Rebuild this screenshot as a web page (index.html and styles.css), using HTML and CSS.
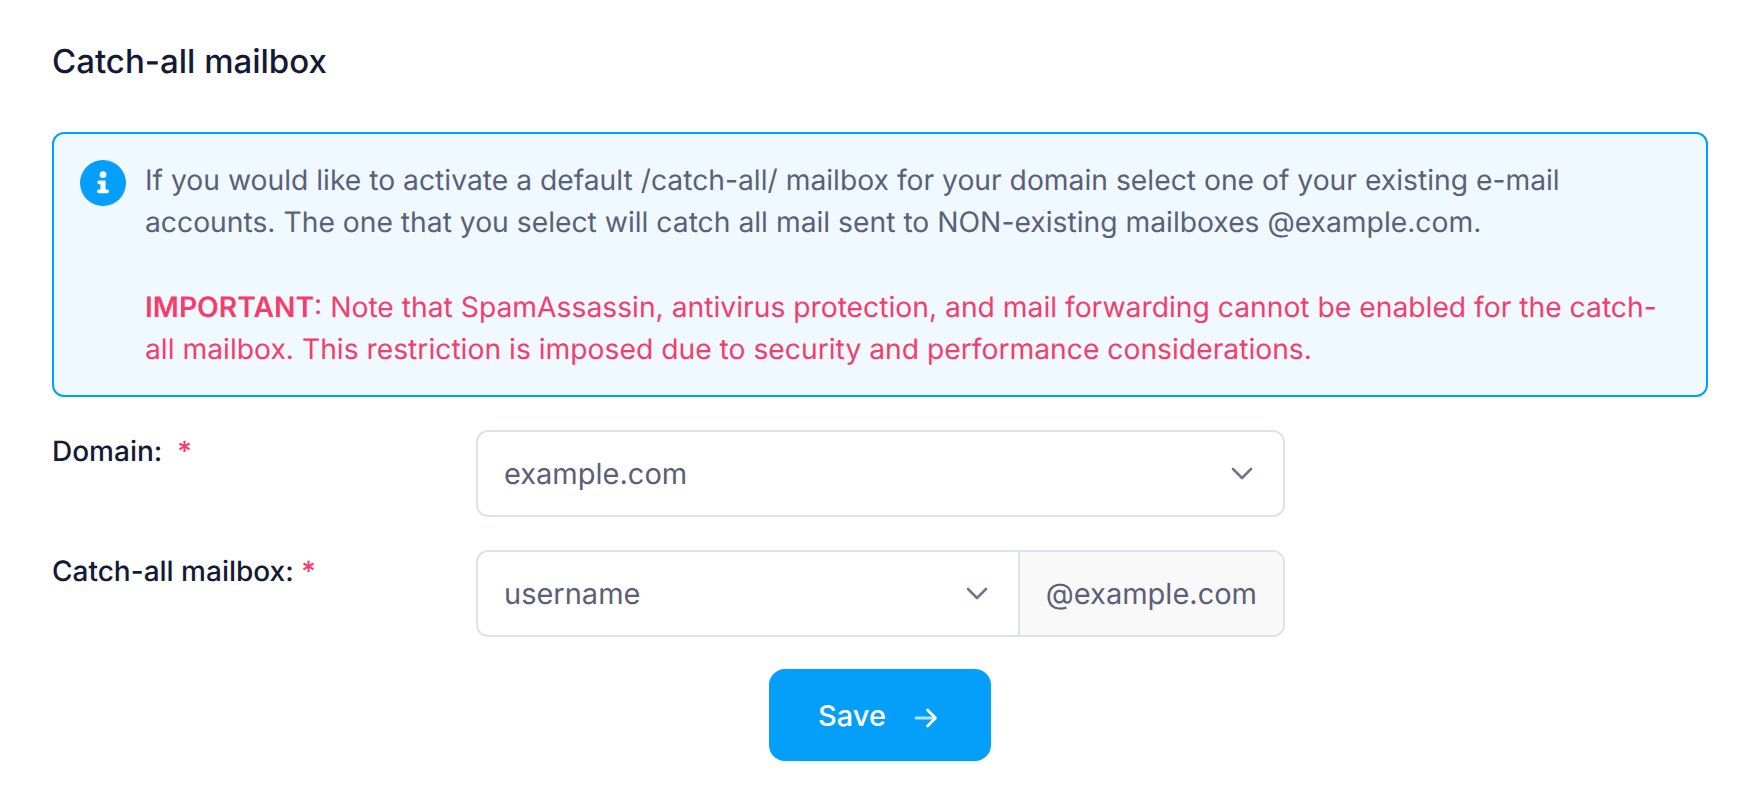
FILE: index.html
```html
<!DOCTYPE html>
<html lang="en">
<head>
<meta charset="utf-8">
<title>Catch-all mailbox</title>
<link rel="stylesheet" href="styles.css">
</head>
<body>
<main class="page">
  <h1 class="title">Catch-all mailbox</h1>
  <section class="notice">
    <svg class="notice-icon" viewBox="0 0 36 36" aria-hidden="true">
      <circle cx="18" cy="18" r="18" fill="#039ffb"/>
      <circle cx="18" cy="11.500" r="2.600" fill="#fff"/>
      <path d="M15 16H20V23H21.200a1.500 1.500 0 0 1 0 3H14.800a1.500 1.500 0 0 1 0-3H16V19H15a1.500 1.500 0 0 1 0-3Z" fill="#fff"/>
    </svg>
    <div class="notice-text">
      <p>If you would like to activate a default /catch-all/ mailbox for your domain select one of your existing e-mail accounts. The one that you select will catch all mail sent to NON-existing mailboxes @example.com.</p>
      <p class="warning"><strong>IMPORTANT</strong>: Note that SpamAssassin, antivirus protection, and mail forwarding cannot be enabled for the catch-all mailbox. This restriction is imposed due to security and performance considerations.</p>
    </div>
  </section>
  <form class="form">
    <div class="row">
      <div class="label">Domain: <span class="req">&nbsp;*</span></div>
      <div class="control select">
        <span class="value">example.com</span>
        <svg class="chevron" viewBox="0 0 24 24" aria-hidden="true"><path d="M3 7l9 9 9-9"/></svg>
      </div>
    </div>
    <div class="row">
      <div class="label">Catch-all mailbox: <span class="req">*</span></div>
      <div class="control group">
        <div class="select inner">
          <span class="value">username</span>
          <svg class="chevron" viewBox="0 0 24 24" aria-hidden="true"><path d="M3 7l9 9 9-9"/></svg>
        </div>
        <span class="addon">@example.com</span>
      </div>
    </div>
    <div class="actions">
      <button class="save" type="button">Save
        <svg class="arrow" viewBox="0 0 24 24" aria-hidden="true"><path class="arrow-shaft" d="M2 12h18"/><path d="M13.500 4l8 8-8 8"/></svg>
      </button>
    </div>
  </form>
</main>
</body>
</html>
```
FILE: styles.css
```css
* { box-sizing: border-box; }
html, body { margin: 0; padding: 0; background: #fff; }
body {
  font-family: Inter, "Liberation Sans", sans-serif;
  color: #5b6078;
  width: 1760px;
  height: 812px;
  overflow: hidden;
  text-rendering: geometricPrecision;
}
.page { padding: 40px 52px 0; }
.title {
  margin: 0 0 50px;
  font-size: 33px;
  line-height: 42px;
  font-weight: 500;
  color: #131a36;
}
.notice {
  display: flex;
  align-items: flex-start;
  gap: 19px;
  height: 265px;
  padding: 25px 26px 0;
  border: 2px solid #039ffb;
  border-radius: 12px;
  background: #f0f9ff;
}
.notice-icon { width: 46px; height: 46px; flex: none; margin-top: 1px; }
.notice-text { font-size: 28.250px; line-height: 42px; }
.notice-text p { margin: 0 0 42px; }
.notice-text p:last-child { margin: 0; }
.warning { color: #f53d6b; padding-top: 1px; }
.warning strong { font-weight: 600; }
.form { padding-top: 33px; }
.row { display: flex; margin-bottom: 33px; }
.label {
  width: 424px;
  flex: none;
  font-size: 28px;
  line-height: 42px;
  font-weight: 500;
  color: #131a36;
}
.req { color: #f53d6b; }
.control {
  width: 809px;
  height: 87px;
  border: 2px solid #dfe2e8;
  border-radius: 12px;
  background: #fff;
  font-size: 29px;
}
.select {
  display: flex;
  align-items: center;
  justify-content: space-between;
  padding: 0 29px 0 26px;
}
.group { display: flex; overflow: hidden; }
.inner { flex: 1; }
.addon {
  display: flex;
  align-items: center;
  padding: 0 26px;
  border-left: 2px solid #dfe2e8;
  background: #f9f9f9;
}
.chevron { width: 24px; height: 24px; }
.chevron path { fill: none; stroke: #6f7490; stroke-width: 2.600; stroke-linecap: round; stroke-linejoin: round; }
.actions { display: flex; justify-content: center; width: 1232px; margin-top: -1px; padding-left: 424px; }
.save {
  display: flex;
  align-items: center;
  justify-content: center;
  gap: 28px;
  width: 222px;
  height: 92px;
  padding: 0 4px 0 0;
  border: 0;
  border-radius: 16px;
  background: #039ffb;
  color: #fff;
  font: 500 29px Inter, "Liberation Sans", sans-serif;
}
.arrow { width: 24px; height: 24px; margin-top: 5px; }
.arrow path { fill: none; stroke: #fff; stroke-width: 2.800; stroke-linecap: round; stroke-linejoin: round; }
.arrow .arrow-shaft { opacity: 0.7; }
```
